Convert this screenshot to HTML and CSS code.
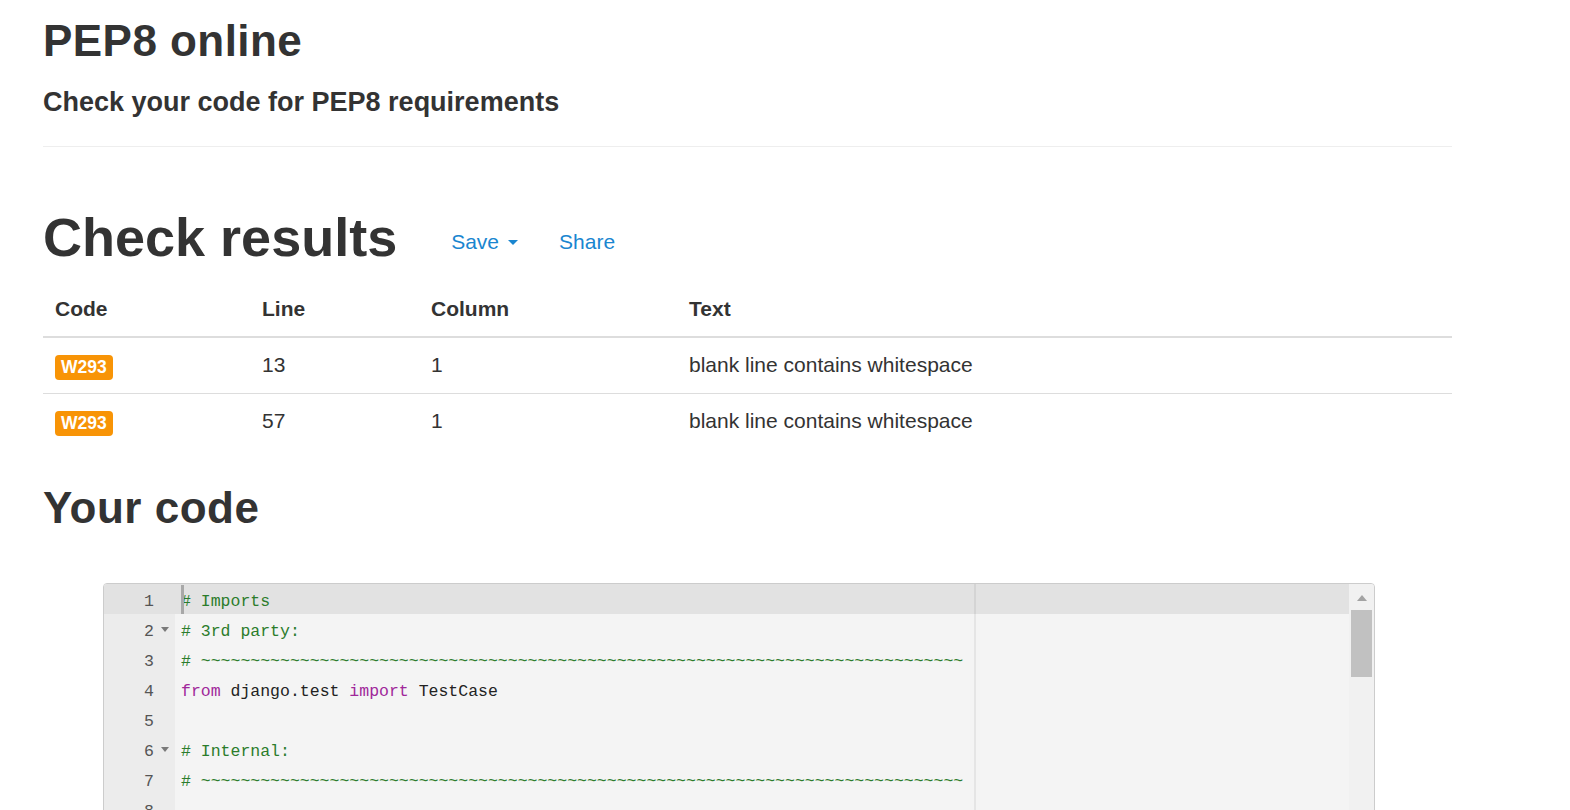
FILE: index.html
```html
<!DOCTYPE html>
<html lang="en">
<head>
<meta charset="utf-8">
<title>PEP8 online</title>
<link rel="stylesheet" href="styles.css">
</head>
<body>
<div class="container">
  <header class="page-header">
    <h1 class="title">PEP8 online</h1>
    <h3 class="subtitle">Check your code for PEP8 requirements</h3>
  </header>
  <hr class="divider">

  <div class="results-head">
    <h2 class="results-title">Check results</h2>
    <ul class="actions">
      <li><a class="action" href="#">Save<span class="caret"></span></a></li>
      <li><a class="action" href="#">Share</a></li>
    </ul>
  </div>

  <table class="results">
    <thead>
      <tr>
        <th class="col-code">Code</th>
        <th class="col-line">Line</th>
        <th class="col-column">Column</th>
        <th class="col-text">Text</th>
      </tr>
    </thead>
    <tbody>
      <tr>
        <td><span class="badge">W293</span></td>
        <td>13</td>
        <td>1</td>
        <td>blank line contains whitespace</td>
      </tr>
      <tr>
        <td><span class="badge">W293</span></td>
        <td>57</td>
        <td>1</td>
        <td>blank line contains whitespace</td>
      </tr>
    </tbody>
  </table>

  <h2 class="code-title">Your code</h2>

  <div class="editor">
    <div class="editor-main">
      <div class="row active"><div class="gutter"><span class="ln">1</span><span class="fold"></span></div><div class="code"><span class="cm-comment"># Imports</span></div></div>
      <div class="row"><div class="gutter"><span class="ln">2</span><span class="fold"><span class="fold-arrow"></span></span></div><div class="code"><span class="cm-comment"># 3rd party:</span></div></div>
      <div class="row"><div class="gutter"><span class="ln">3</span><span class="fold"></span></div><div class="code"><span class="cm-comment"># ~~~~~~~~~~~~~~~~~~~~~~~~~~~~~~~~~~~~~~~~~~~~~~~~~~~~~~~~~~~~~~~~~~~~~~~~~~~~~</span></div></div>
      <div class="row"><div class="gutter"><span class="ln">4</span><span class="fold"></span></div><div class="code"><span class="cm-keyword">from</span> django.test <span class="cm-keyword">import</span> TestCase</div></div>
      <div class="row"><div class="gutter"><span class="ln">5</span><span class="fold"></span></div><div class="code"></div></div>
      <div class="row"><div class="gutter"><span class="ln">6</span><span class="fold"><span class="fold-arrow"></span></span></div><div class="code"><span class="cm-comment"># Internal:</span></div></div>
      <div class="row"><div class="gutter"><span class="ln">7</span><span class="fold"></span></div><div class="code"><span class="cm-comment"># ~~~~~~~~~~~~~~~~~~~~~~~~~~~~~~~~~~~~~~~~~~~~~~~~~~~~~~~~~~~~~~~~~~~~~~~~~~~~~</span></div></div>
      <div class="row"><div class="gutter"><span class="ln">8</span><span class="fold"></span></div><div class="code"></div></div>
      <div class="row"><div class="gutter"><span class="ln">9</span><span class="fold"></span></div><div class="code"><span class="cm-keyword">from</span> .models <span class="cm-keyword">import</span> Item</div></div>
      <div class="row"><div class="gutter"><span class="ln">10</span><span class="fold"></span></div><div class="code"></div></div>
      <div class="row"><div class="gutter"><span class="ln">11</span><span class="fold"></span></div><div class="code"></div></div>
      <div class="row"><div class="gutter"><span class="ln">12</span><span class="fold"><span class="fold-arrow"></span></span></div><div class="code"><span class="cm-keyword">class</span> TestModels(TestCase):</div></div>
      <div class="row"><div class="gutter"><span class="ln">13</span><span class="fold"></span></div><div class="code">    </div></div>
      <div class="ruler"></div>
      <div class="cursor"></div>
    </div>
    <div class="scrollbar">
      <span class="sb-up"></span>
      <span class="sb-thumb"></span>
    </div>
  </div>
</div>
</body>
</html>
```
FILE: styles.css
```css
* {
  box-sizing: border-box;
}

html,
body {
  margin: 0;
  padding: 0;
  overflow: hidden;
  background: #ffffff;
}

body {
  font-family: "Liberation Sans", Arial, Helvetica, sans-serif;
  font-size: 21px;
  color: #333333;
}

.container {
  width: 1452px;
  padding: 17px 0 0 43px;
}

.title {
  margin: 0;
  font-size: 44px;
  line-height: 48px;
  font-weight: 700;
  letter-spacing: 0.45px;
}

.subtitle {
  margin: 22px 0 0;
  font-size: 27px;
  line-height: 30px;
  font-weight: 700;
}

.divider {
  margin: 29px 0 0;
  height: 0;
  border: 0;
  border-top: 1px solid #eeeeee;
}

.results-head {
  display: flex;
  align-items: flex-start;
  margin-top: 60px;
}

.results-title {
  margin: 0;
  font-size: 54px;
  line-height: 60px;
  font-weight: 700;
}

.actions {
  list-style: none;
  margin: 20px 0 0 54px;
  padding: 0;
  display: flex;
  gap: 41px;
}

.action {
  display: flex;
  align-items: center;
  color: #1a86d0;
  text-decoration: none;
  line-height: 30px;
}

.caret {
  display: inline-block;
  width: 0;
  height: 0;
  margin-left: 9px;
  margin-top: 1px;
  border-top: 5px solid currentColor;
  border-left: 5.5px solid transparent;
  border-right: 5.5px solid transparent;
}

.results {
  width: 1409px;
  margin-top: 15px;
  border-collapse: separate;
  border-spacing: 0;
  table-layout: fixed;
}

.results th,
.results td {
  padding: 12px;
  line-height: 30px;
  font-size: 21px;
  text-align: left;
  vertical-align: middle;
}

.results td {
  padding-bottom: 13px;
}

.results th {
  font-weight: 700;
  border-bottom: 2px solid #dddddd;
}

.results td {
  border-top: 1px solid #dddddd;
}

.results tbody tr:first-child td {
  border-top: 0;
}

.col-code { width: 207px; }
.col-line { width: 169px; }
.col-column { width: 258px; }

.badge {
  display: inline-block;
  padding: 0 6px;
  line-height: 25px;
  font-size: 17.5px;
  font-weight: 700;
  color: #ffffff;
  background: #f89406;
  border-radius: 4px;
  vertical-align: -1px;
}

.code-title {
  margin: 35px 0 0;
  font-size: 44px;
  line-height: 48px;
  font-weight: 700;
  letter-spacing: 0.5px;
}

.editor {
  display: flex;
  width: 1272px;
  height: 420px;
  margin: 51px 0 0 60px;
  border: 1px solid #cccccc;
  border-radius: 4px;
  overflow: hidden;
  background: #f4f4f4;
}

.editor-main {
  position: relative;
  width: 1245px;
  background: linear-gradient(to right, #ececec 71px, #f4f4f4 71px);
  font-family: "Liberation Mono", "DejaVu Sans Mono", monospace;
  font-size: 16.5px;
  color: #222222;
}

.row {
  display: flex;
  height: 30px;
}

.gutter {
  display: flex;
  width: 71px;
  flex: none;
  background: #ececec;
}

.row.active,
.row.active .gutter {
  background: #e2e2e2;
}

.ln {
  width: 50px;
  text-align: right;
  color: #555555;
  line-height: 24px;
  padding-top: 6px;
}

.fold {
  width: 21px;
  display: flex;
  align-items: center;
  padding-left: 7px;
}

.fold-arrow {
  width: 0;
  height: 0;
  border-top: 5px solid #7a7a7a;
  border-left: 4px solid transparent;
  border-right: 4px solid transparent;
}

.code {
  flex: 1;
  padding: 6px 0 0 6px;
  line-height: 24px;
  white-space: pre;
}

.cm-comment {
  color: #2b7c2b;
}

.cm-keyword {
  color: #a0279a;
}

.ruler {
  position: absolute;
  top: 0;
  bottom: 0;
  left: 870px;
  width: 2px;
  background: rgba(0, 0, 0, 0.06);
}

.cursor {
  position: absolute;
  top: 1px;
  left: 77px;
  width: 3px;
  height: 29px;
  background: #a8a8a8;
}

.scrollbar {
  width: 25px;
  flex: none;
  display: flex;
  flex-direction: column;
  align-items: center;
  background: #f1f1f1;
}

.sb-up {
  margin-top: 11px;
  width: 0;
  height: 0;
  border-bottom: 6px solid #a3a3a3;
  border-left: 5.5px solid transparent;
  border-right: 5.5px solid transparent;
}

.sb-thumb {
  margin-top: 9px;
  width: 21px;
  height: 67px;
  background: #c1c1c1;
}
```
